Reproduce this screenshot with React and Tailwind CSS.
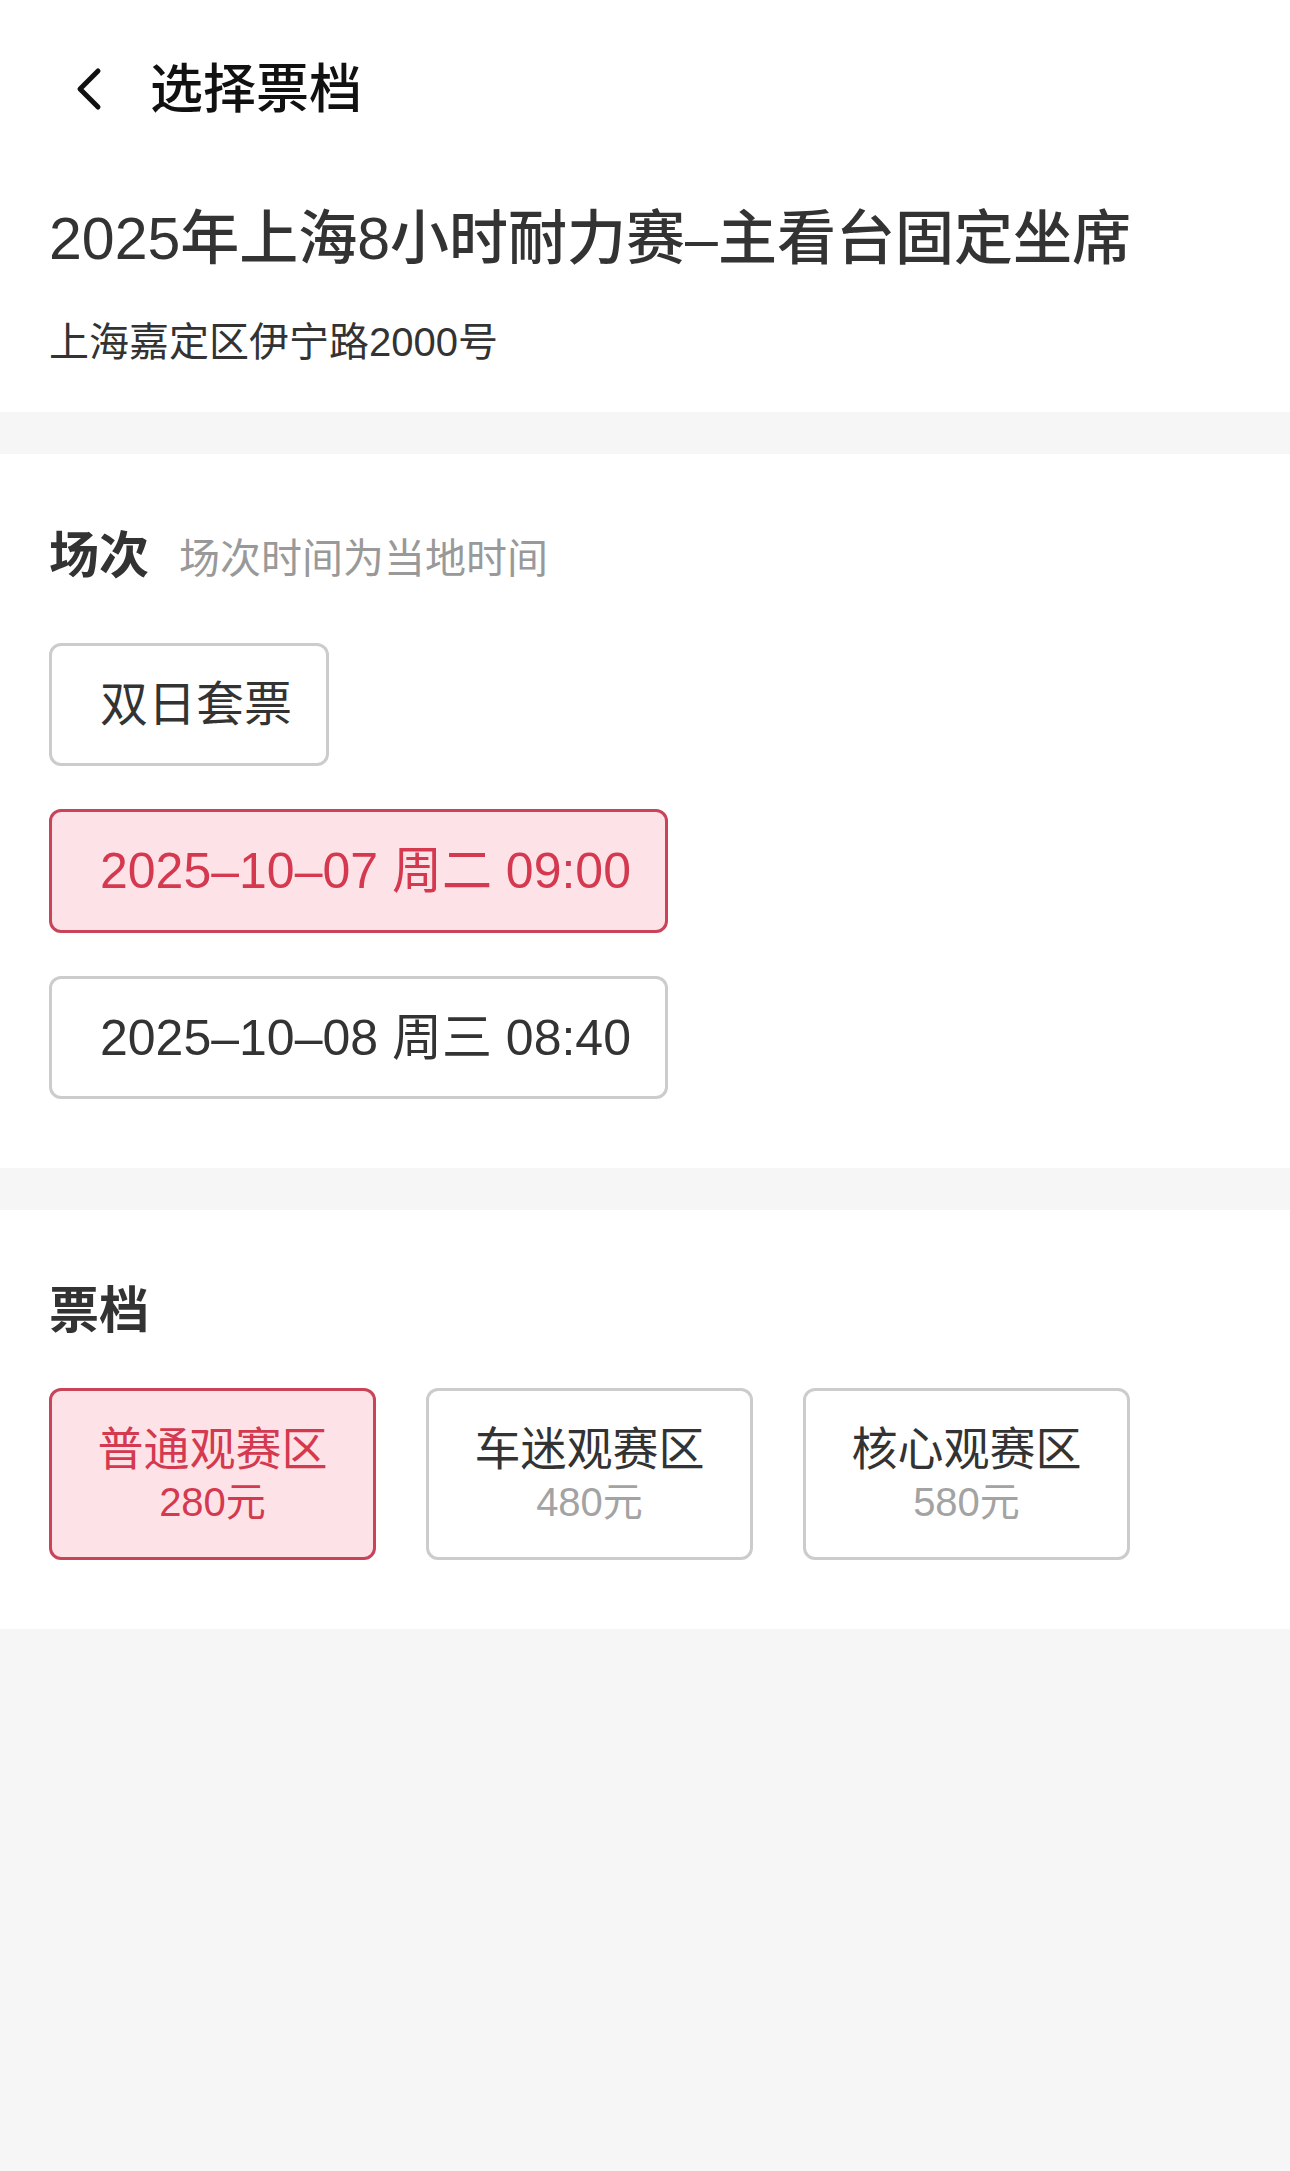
import React from 'react';

const font = { fontFamily: '"Liberation Sans", "Noto Sans CJK SC", sans-serif' };

const Sessions = [
  { label: '双日套票', active: false, size: 'text-[48px]' },
  { label: '2025–10–07 周二 09:00', active: true, size: 'text-[50px]' },
  { label: '2025–10–08 周三 08:40', active: false, size: 'text-[50px]' },
];

const Tiers = [
  { name: '普通观赛区', price: '280元', active: true },
  { name: '车迷观赛区', price: '480元', active: false },
  { name: '核心观赛区', price: '580元', active: false },
];

const App = () => {
  return (
    <div className="min-h-[2171px] w-full bg-[#f6f6f6] text-[#333]" style={font}>
      <div className="bg-white pb-[50px]">
        <header className="flex items-center h-[130px] mt-[24px] pl-[74px]">
          <svg width="30" height="44" viewBox="0 0 30 44" fill="none">
            <polyline points="24,4 6,22 24,40" stroke="#111" strokeWidth="5" strokeLinecap="round" strokeLinejoin="round" />
          </svg>
          <h1 className="ml-[46px] text-[53px] leading-none font-medium text-[#111]">选择票档</h1>
        </header>
        <div className="px-[49px] mt-[56px]">
          <h2 className="text-[59px] leading-none font-medium text-[#333] whitespace-nowrap">2025年上海8小时耐力赛–主看台固定坐席</h2>
          <p className="mt-[53px] text-[40px] leading-none text-[#333]">上海嘉定区伊宁路2000号</p>
        </div>
      </div>

      <section className="mt-[42px] bg-white px-[49px] pt-[77px] pb-[69px]">
        <div className="flex items-baseline gap-[30px]">
          <h3 className="text-[50px] leading-none font-bold text-[#333]">场次</h3>
          <span className="text-[41px] leading-none text-[#999]">场次时间为当地时间</span>
        </div>
        <div className="mt-[62px] flex flex-col items-start gap-[43px]">
          {Sessions.map((s) => (
            <button
              key={s.label}
              className={
                s.active
                  ? `h-[124px] pl-[48px] pr-[34px] rounded-[12px] border-[3px] border-[#c94458] bg-[#fde3e7] text-[#d4394f] ${s.size} leading-none whitespace-nowrap`
                  : `h-[123px] pl-[48px] pr-[34px] rounded-[12px] border-[3px] border-[#cccccc] bg-white text-[#333] ${s.size} leading-none whitespace-nowrap`
              }
            >
              {s.label}
            </button>
          ))}
        </div>
      </section>

      <section className="mt-[42px] bg-white px-[49px] pt-[76px] pb-[69px]">
        <h3 className="text-[50px] leading-none font-bold text-[#333]">票档</h3>
        <div className="mt-[52px] flex gap-[50px]">
          {Tiers.map((t) => (
            <div
              key={t.name}
              className={
                t.active
                  ? 'w-[327px] h-[172px] rounded-[12px] border-[3px] border-[#c94458] bg-[#fde3e7] flex flex-col items-center justify-center'
                  : 'w-[327px] h-[172px] rounded-[12px] border-[3px] border-[#cccccc] bg-white flex flex-col items-center justify-center'
              }
            >
              <span className={t.active ? 'text-[46px] leading-[1.2] text-[#d4394f]' : 'text-[46px] leading-[1.2] text-[#333]'}>{t.name}</span>
              <span className={t.active ? 'text-[40px] leading-[1.2] text-[#d4394f]' : 'text-[40px] leading-[1.2] text-[#a3a3a3]'}>{t.price}</span>
            </div>
          ))}
        </div>
      </section>
    </div>
  );
};

export default App;
